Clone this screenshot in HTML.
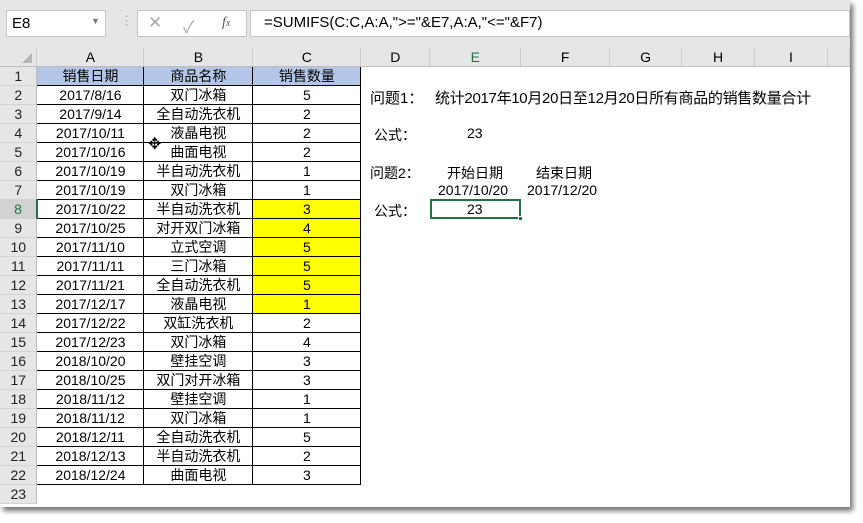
<!DOCTYPE html>
<html><head><meta charset="utf-8"><style>
*{margin:0;padding:0;box-sizing:border-box}
body{width:863px;height:523px;background:#fff;position:relative;overflow:hidden;font-family:"Liberation Sans","Noto Sans CJK SC",sans-serif;}
.frame{position:absolute;left:0;top:0;width:850px;height:507px;background:#fff;box-shadow:3px 4px 5px rgba(0,0,0,.55);}
.top{position:absolute;left:0;top:0;width:850px;height:48px;background:#e6e6e6;}
.box{position:absolute;background:#fff;border:1px solid #c6c6c6;}
.abs{position:absolute;white-space:nowrap}
table{position:absolute;left:0;top:48px;border-collapse:collapse;table-layout:fixed;font-size:14px;}
td{height:19px;padding:0;text-align:center;line-height:18px;white-space:nowrap;overflow:hidden}
td.rh{background:#e6e6e6;color:#222;border-right:1px solid #bdbdbd;border-bottom:1px solid #d4d4d4;font-size:14px}
tr.ch td{background:#e6e6e6;height:18px;border-right:1px solid #cfcfcf;border-bottom:1px solid #bdbdbd;font-size:14px}
td.d{border:1px solid #000}
td.h{background:#b4c6e7}
td.y{background:#ffff00}
td.sel{background:#d2d2d2;color:#217346;border-bottom:2px solid #217346}
td.rsel{background:#d2d2d2;color:#217346;border-right:2px solid #217346}
</style></head><body>
<div class="frame">
<div class="top"></div>
<div class="box" style="left:6px;top:10px;width:100px;height:27px"></div>
<div class="abs" style="left:12px;top:15px;font-size:15px">E8</div>
<div class="abs" style="left:91px;top:16px;font-size:9px;color:#777">▼</div>
<div class="abs" style="left:120px;top:13px;font-size:13px;color:#aaa">⋮</div>
<div class="box" style="left:137px;top:10px;width:110px;height:27px"></div>
<div class="abs" style="left:148px;top:13px;font-size:17px;color:#aaa">✕</div>
<div class="abs" style="left:183px;top:13px;font-size:17px;color:#aaa">✓</div>
<div class="abs" style="left:222px;top:15px;font-size:14px;font-style:italic;font-family:'Liberation Serif',serif;color:#555">f<span style="font-size:10px">x</span></div>
<div class="box" style="left:250px;top:10px;width:600px;height:27px"></div>
<div class="abs" style="left:264px;top:14px;font-size:15px">=SUMIFS(C:C,A:A,"&gt;="&amp;E7,A:A,"&lt;="&amp;F7)</div>
<table>
<colgroup><col style="width:37px"><col style="width:107px"><col style="width:109px"><col style="width:108px"><col style="width:69px"><col style="width:91px"><col style="width:89px"><col style="width:72px"><col style="width:73px"><col style="width:73px"><col style="width:22px"></colgroup>
<tr class="ch"><td></td><td>A</td><td>B</td><td>C</td><td>D</td><td class="sel">E</td><td>F</td><td>G</td><td>H</td><td>I</td><td></td></tr>
<tr><td class="rh">1</td><td class="d h">销售日期</td><td class="d h">商品名称</td><td class="d h">销售数量</td><td colspan="7"></td></tr>
<tr><td class="rh">2</td><td class="d">2017/8/16</td><td class="d">双门冰箱</td><td class="d">5</td><td colspan="7"></td></tr>
<tr><td class="rh">3</td><td class="d">2017/9/14</td><td class="d">全自动洗衣机</td><td class="d">2</td><td colspan="7"></td></tr>
<tr><td class="rh">4</td><td class="d">2017/10/11</td><td class="d">液晶电视</td><td class="d">2</td><td colspan="7"></td></tr>
<tr><td class="rh">5</td><td class="d">2017/10/16</td><td class="d">曲面电视</td><td class="d">2</td><td colspan="7"></td></tr>
<tr><td class="rh">6</td><td class="d">2017/10/19</td><td class="d">半自动洗衣机</td><td class="d">1</td><td colspan="7"></td></tr>
<tr><td class="rh">7</td><td class="d">2017/10/19</td><td class="d">双门冰箱</td><td class="d">1</td><td colspan="7"></td></tr>
<tr><td class="rh rsel">8</td><td class="d">2017/10/22</td><td class="d">半自动洗衣机</td><td class="d y">3</td><td colspan="7"></td></tr>
<tr><td class="rh">9</td><td class="d">2017/10/25</td><td class="d">对开双门冰箱</td><td class="d y">4</td><td colspan="7"></td></tr>
<tr><td class="rh">10</td><td class="d">2017/11/10</td><td class="d">立式空调</td><td class="d y">5</td><td colspan="7"></td></tr>
<tr><td class="rh">11</td><td class="d">2017/11/11</td><td class="d">三门冰箱</td><td class="d y">5</td><td colspan="7"></td></tr>
<tr><td class="rh">12</td><td class="d">2017/11/21</td><td class="d">全自动洗衣机</td><td class="d y">5</td><td colspan="7"></td></tr>
<tr><td class="rh">13</td><td class="d">2017/12/17</td><td class="d">液晶电视</td><td class="d y">1</td><td colspan="7"></td></tr>
<tr><td class="rh">14</td><td class="d">2017/12/22</td><td class="d">双缸洗衣机</td><td class="d">2</td><td colspan="7"></td></tr>
<tr><td class="rh">15</td><td class="d">2017/12/23</td><td class="d">双门冰箱</td><td class="d">4</td><td colspan="7"></td></tr>
<tr><td class="rh">16</td><td class="d">2018/10/20</td><td class="d">壁挂空调</td><td class="d">3</td><td colspan="7"></td></tr>
<tr><td class="rh">17</td><td class="d">2018/10/25</td><td class="d">双门对开冰箱</td><td class="d">3</td><td colspan="7"></td></tr>
<tr><td class="rh">18</td><td class="d">2018/11/12</td><td class="d">壁挂空调</td><td class="d">1</td><td colspan="7"></td></tr>
<tr><td class="rh">19</td><td class="d">2018/11/12</td><td class="d">双门冰箱</td><td class="d">1</td><td colspan="7"></td></tr>
<tr><td class="rh">20</td><td class="d">2018/12/11</td><td class="d">全自动洗衣机</td><td class="d">5</td><td colspan="7"></td></tr>
<tr><td class="rh">21</td><td class="d">2018/12/13</td><td class="d">半自动洗衣机</td><td class="d">2</td><td colspan="7"></td></tr>
<tr><td class="rh">22</td><td class="d">2018/12/24</td><td class="d">曲面电视</td><td class="d">3</td><td colspan="7"></td></tr>
<tr><td class="rh">23</td><td colspan="10"></td></tr>
</table>
<div style="position:absolute;left:22px;top:53px;width:0;height:0;border-left:10px solid transparent;border-bottom:10px solid #b5b5b5"></div>
<div class="abs" style="left:370px;top:87px;font-size:15px">问题1：</div>
<div class="abs" style="left:435px;top:87px;font-size:15px;letter-spacing:-0.3px">统计2017年10月20日至12月20日所有商品的销售数量合计</div>
<div class="abs" style="left:374px;top:125px;font-size:14px">公式：</div>
<div class="abs" style="left:467px;top:125px;font-size:14px">23</div>
<div class="abs" style="left:370px;top:163px;font-size:14px">问题2：</div>
<div class="abs" style="left:447px;top:163px;font-size:14px">开始日期</div>
<div class="abs" style="left:536px;top:163px;font-size:14px">结束日期</div>
<div class="abs" style="left:438px;top:182px;font-size:14px">2017/10/20</div>
<div class="abs" style="left:527px;top:182px;font-size:14px">2017/12/20</div>
<div class="abs" style="left:374px;top:201px;font-size:14px">公式：</div>
<div style="position:absolute;left:430px;top:199px;width:91px;height:20px;border:2px solid #217346"></div>
<div style="position:absolute;left:518px;top:216px;width:5px;height:5px;background:#217346;border:1px solid #fff"></div>
<div class="abs" style="left:467px;top:201px;font-size:14px">23</div>
<div class="abs" style="left:148px;top:134px;font-size:16px">✥</div>
</div>
</body></html>
